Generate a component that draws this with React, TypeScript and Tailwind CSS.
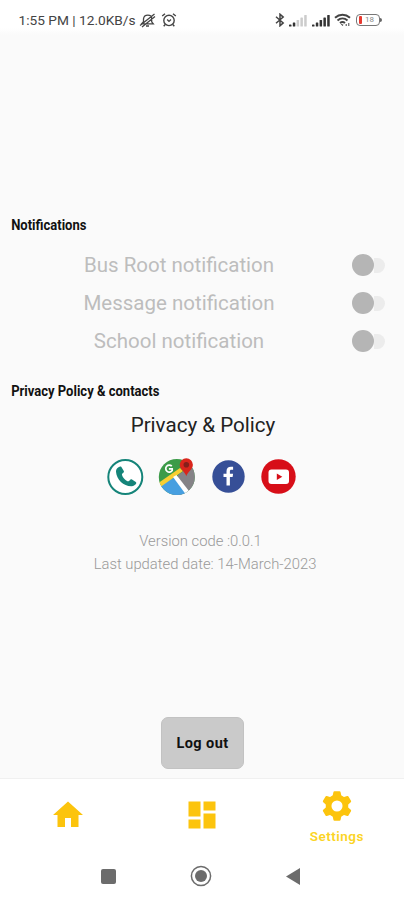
import { useState } from 'react';

const notificationItems = ['Bus Root notification', 'Message notification', 'School notification'];

function SignalBars({ active }: { active: number }) {
  return (
    <svg className="h-[13px] w-[18px]" viewBox="0 0 18 13">
      {[2, 4, 6.5, 9, 11.5].map((height, i) => (
        <rect
          key={height}
          x={i * 3.8}
          y={12.5 - height}
          width="2.5"
          height={height}
          rx="0.6"
          fill={i < active ? '#333' : '#ccc'}
        />
      ))}
    </svg>
  );
}

function StatusBar() {
  return (
    <header className="flex h-[35px] items-center bg-gradient-to-b from-white from-80% to-[#fafafa] pt-[5px] pr-[22px] pl-[18.5px] text-[#444]">
      <span className="w-[119.5px] text-[13.7px] whitespace-nowrap">1:55 PM | 12.0KB/s</span>
      {/* Muted bell */}
      <svg className="ml-[1px] h-4 w-[17px]" viewBox="0 0 17 16" fill="none" stroke="currentColor" strokeWidth="1.3">
        <path d="M2.5 11.8h11.8l-1.6-2V6.8c0-5-7.6-5-8.2 0v3L2.5 12zM7 14h3M1 13.5 15.5 2M3 15 16 4.5" />
      </svg>
      {/* Alarm */}
      <svg className="ml-[5px] h-4 w-4" viewBox="0 0 16 16" fill="none" stroke="currentColor" strokeWidth="1.4">
        <circle cx="8" cy="8.4" r="5.2" />
        <path d="M1.2 4 4 1.7M12 1.7 14.8 4M4.2 12.5l-1.5 1.8M11.8 12.5l1.5 1.8M6.2 7.6 8 9.4l2-1.8" />
      </svg>
      <div className="ml-auto flex items-center">
        <svg className="mr-[4px] h-[14px] w-[10px]" viewBox="0 0 10 14" fill="none" stroke="#444" strokeWidth="1.5">
          <path d="m1 3.8 7.2 6.1L5 12.8V1.2l3.2 2.9L1 10.2" />
        </svg>
        <SignalBars active={2} />
        <span className="w-[5px]" />
        <SignalBars active={5} />
        <svg className="ml-[4px] h-[14px] w-[17px]" viewBox="0 0 17 14" fill="none" stroke="#444" strokeWidth="2">
          <path d="M1 4.8c4.5-4 10.5-4 15 0M3.5 7.5c3-2.6 7-2.6 10 0M6 10c1.6-1.3 3.4-1.3 5 0" />
          <path d="m6.3 10.4 2.2 2.7 1-1.4z" fill="#444" stroke="none" />
          <path d="M12.2 13v-2M14.8 13v-3" strokeWidth="1" />
        </svg>
        <div className="ml-[5px] flex h-3 w-[24.5px] items-center rounded-[4px] border border-[#777] pl-[2px]">
          <span className="h-[8px] w-[3.5px] rounded-[1px] bg-[#e83a30]" />
          <span className="ml-[3px] text-[8px] leading-none text-[#888]">18</span>
        </div>
        <span className="h-[4px] w-[2px] rounded-r bg-[#666]" />
      </div>
    </header>
  );
}

function Toggle({ label }: { label: string }) {
  const [on, setOn] = useState(false);

  return (
    <button
      role="switch"
      aria-label={label}
      aria-checked={on}
      onClick={() => setOn(!on)}
      className="flex h-[22px] w-[33px] items-center"
    >
      <span className={`size-[22px] shrink-0 rounded-full bg-[#b5b5b5] ${on ? 'order-2' : ''}`} />
      <span className={`h-[15px] w-[11px] bg-[#ececec] ${on ? 'rounded-l-full' : 'rounded-r-full'}`} />
    </button>
  );
}

function SocialLinks() {
  return (
    <div className="flex h-[38px] items-center pl-[106px]">
      {/* Phone */}
      <svg className="size-[38px]" viewBox="0 0 38 38">
        <circle cx="19.3" cy="19" r="17" fill="#fff" stroke="#158479" strokeWidth="2" />
        <path
          d="M12.500 9.300c-1.500.8-2.600 2.300-2.500 4.400.5 7.800 7.700 14.700 15.600 14.500 2.200-.1 3.800-1 4.600-2.600.3-.6.1-1.100-.4-1.500l-3.800-2.600c-.6-.4-1.200-.3-1.700.2l-1.300 1.300c-.5.4-1 .5-1.600.2-2.700-1.400-4.500-3.400-5.400-6.100-.2-.6 0-1.100.4-1.500l1.200-1.100c.5-.5.5-1 .2-1.600l-2.400-3.800c-.7-.9-1.800-.4-2.900.2z"
          fill="#158479"
        />
      </svg>
      {/* Maps */}
      <svg className="ml-[14px] size-[38px]" viewBox="0 0 38 38">
        <defs>
          <clipPath id="map-circle">
            <circle cx="18.8" cy="19" r="18" />
          </clipPath>
        </defs>
        <g clipPath="url(#map-circle)">
          <path d="M0 0h38v38H0z" fill="#3c9b48" />
          <path d="M20 17 38 4v34H14z" fill="#858387" />
          <path d="m0 29 18-11 12 20H0z" fill="#479fe0" />
          <path d="m-1 26 23-16 3 3L1 30z" fill="#f8cf32" />
          <path d="m15 19 3.5-2 14 18-3.5 3z" fill="#fff" />
        </g>
        <path d="M13.8 8.2a3.500 3.500 0 1 0 .4 4.300v-1.700h-3.300" fill="none" stroke="#fff" strokeWidth="1.7" />
        <path d="M28.3 18.2c-.8-4-6.600-6.400-6.600-11.400a6.600 6.600 0 0 1 13.200 0c0 5-5.700 7.400-6.600 11.400z" fill="#d9261c" />
        <circle cx="28.3" cy="6.8" r="2.8" fill="#84201b" />
      </svg>
      {/* Facebook */}
      <svg className="ml-[16px] size-[33px]" viewBox="0 0 33 33">
        <circle cx="16.5" cy="16.5" r="16.2" fill="#364f97" />
        <path
          d="M14.5 25.5v-8.400h-3v-3.400h3v-2.500c0-3.100 1.800-4.500 4.500-4.500 1.300 0 2.100.1 2.100.1v2.900h-1.700c-1.200 0-1.500.6-1.500 1.700v2.300h3.200l-.5 3.400h-2.700v8.400z"
          fill="#fff"
        />
      </svg>
      {/* YouTube */}
      <svg className="ml-[16px] size-[35px]" viewBox="0 0 35 35">
        <circle cx="17.5" cy="17.5" r="17.2" fill="#d70e18" />
        <rect x="7.5" y="10.5" width="20.5" height="14.5" rx="3" fill="#fff" />
        <path d="m15.8 14.5 5.500 3.200-5.500 3.300z" fill="#d70e18" />
      </svg>
    </div>
  );
}

function BottomTabs() {
  return (
    <nav className="grid h-[74px] grid-cols-3 border-t border-[#f0f0f0] bg-white pl-[1px] text-[#fcc40d]">
      <button aria-label="Home" className="flex justify-center pt-[18px]">
        <svg className="size-9" viewBox="0 0 24 24" fill="currentColor">
          <path d="M10 20v-6h4v6h5v-8h3L12 3 2 12h3v8z" />
        </svg>
      </button>
      <button aria-label="Dashboard" className="flex justify-center pt-[18px]">
        <svg className="size-9" viewBox="0 0 24 24" fill="currentColor">
          <path d="M3 13h8V3H3v10zm0 8h8v-6H3v6zm10 0h8V11h-8v10zm0-18v6h8V3h-8z" />
        </svg>
      </button>
      <button className="flex flex-col items-center pt-[8.5px]">
        <svg className="size-9" viewBox="0 0 24 24" fill="currentColor">
          <circle cx="12" cy="12" r="5.600" fill="none" stroke="currentColor" strokeWidth="3.800" />
          {[0, 60, 120, 180, 240, 300].map(angle => (
            <path key={angle} d="m8.900 6 .7-3.200q.1-.6.700-.6h3.400q.6 0 .7.600l.7 3.200z" transform={`rotate(${angle} 12 12)`} />
          ))}
        </svg>
        <span className="mt-[4.5px] text-[13.5px] leading-4 font-semibold tracking-[0.5px] text-[#fbd425]">
          Settings
        </span>
      </button>
    </nav>
  );
}

function SystemNav() {
  return (
    <div className="flex h-12 items-center bg-white pl-[101px] text-[#6c6c6c]">
      <span className="size-[15px] rounded-[2px] bg-current" />
      <svg className="ml-[74px] size-[22px]" viewBox="0 0 22 22">
        <circle cx="11" cy="11" r="9.6" fill="none" stroke="currentColor" strokeWidth="1.5" />
        <circle cx="11" cy="11" r="6" fill="currentColor" />
      </svg>
      <svg className="ml-[74px] h-[17px] w-[14px]" viewBox="0 0 14 17">
        <path d="M0 8.5 14 0v17z" fill="currentColor" />
      </svg>
    </div>
  );
}

export default function App() {
  return (
    <div className="flex h-[900px] w-[404px] flex-col overflow-hidden bg-[#fafafa] font-[Roboto,sans-serif]">
      <StatusBar />

      <main className="flex flex-1 flex-col pt-[180px]">
        <h2 className="h-5 origin-left scale-x-[0.93] pl-[12px] text-[14px] leading-5 font-bold text-[#111]">
          Notifications
        </h2>
        <ul className="mt-[11px]">
          {notificationItems.map(item => (
            <li key={item} className="flex h-[38.2px] items-center pr-[19px]">
              <span className="flex-1 pl-[6px] text-center text-[20.5px] text-[#bdbdbd]">{item}</span>
              <Toggle label={item} />
            </li>
          ))}
        </ul>

        <h2 className="mt-[20px] h-5 origin-left scale-x-[0.93] pl-[12px] text-[14px] leading-5 font-bold text-[#111]">
          Privacy Policy &amp; contacts
        </h2>
        <p className="mt-[10px] pl-[2px] text-center text-[20.6px] leading-[28px] text-[#222]">Privacy &amp; Policy</p>
        <div className="mt-[19px]">
          <SocialLinks />
        </div>

        {/* App version */}
        <div className="mt-[34px] text-center text-[14.8px] leading-[23px] font-light text-[#999]">
          <p className="pr-[3px]">Version code :0.0.1</p>
          <p className="pl-[6px]">Last updated date: 14-March-2023</p>
        </div>

        <button className="mt-auto mb-[9px] ml-[161px] h-[52px] w-[83px] rounded-[7px] border border-[#c2c2c2] bg-[#cacaca] pt-[2px] text-[14.5px] font-bold tracking-[0.4px] text-[#111]">
          Log out
        </button>
      </main>

      <BottomTabs />
      <SystemNav />
    </div>
  );
}
